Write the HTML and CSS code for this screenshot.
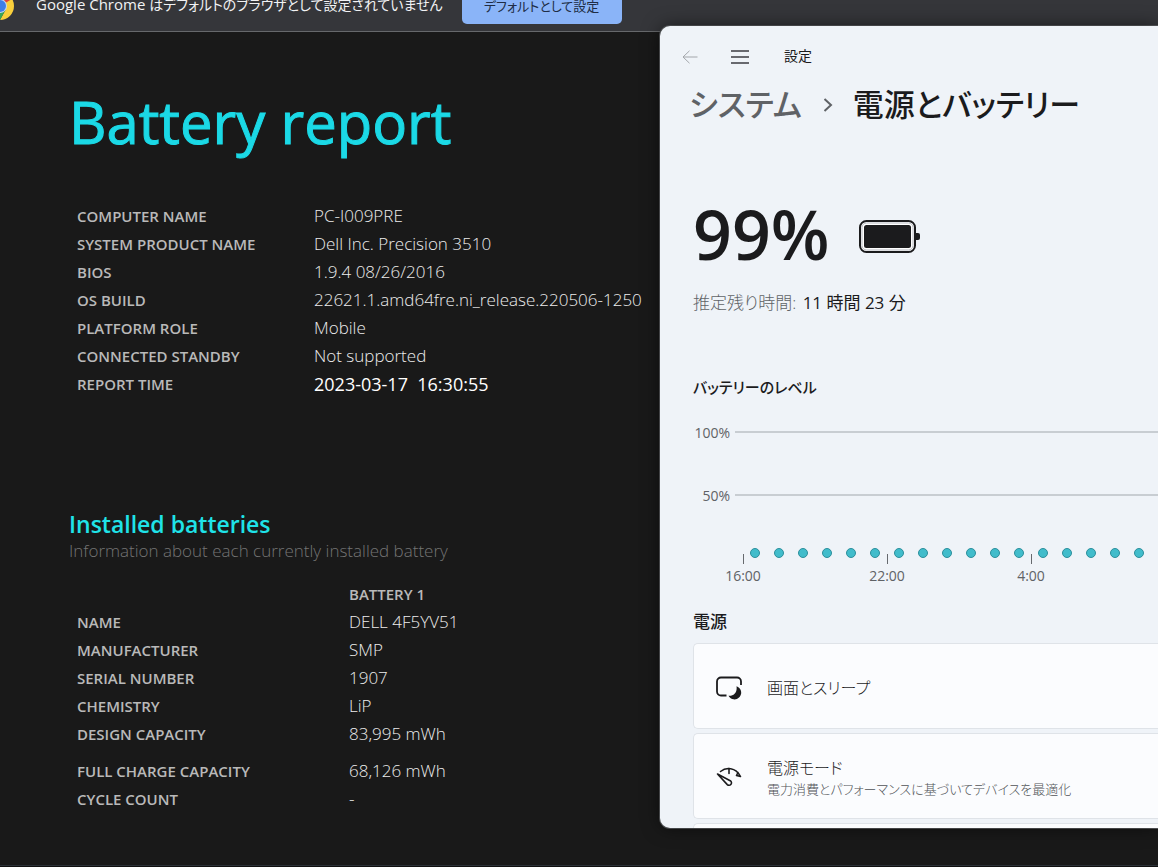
FILE: index.html
```html
<!DOCTYPE html>
<html lang="ja">
<head>
<meta charset="utf-8">
<title>Battery report</title>
<link rel="stylesheet" href="styles.css">
</head>
<body>
<div class="browser">
  <div class="infobar">
    <svg class="chrome-logo" viewBox="0 0 28 28" aria-hidden="true">
      <path d="M14 14V0A14 14 0 0 1 14 28L20 17Z" fill="#f9cf3c"/>
      <path d="M14 14 1.9 7A14 14 0 0 0 14 28L20 17Z" fill="#3ba757"/>
      <path d="M14 14 1.9 7A14 14 0 0 1 26.1 7Z" fill="#e24335"/>
      <circle cx="14" cy="14" r="7" fill="#c3d6f5"/>
      <circle cx="14" cy="14" r="6" fill="#3f7ee8"/>
    </svg>
    <span class="infobar-text">Google Chrome <span class="infobar-ja">はデフォルトのブラウザとして設定されていません</span></span>
    <button class="infobar-button" type="button">デフォルトとして設定</button>
  </div>
  <main class="report">
    <h1 class="report-title">Battery report</h1>
    <table class="facts">
      <tr><th scope="row">COMPUTER NAME</th><td>PC-I009PRE</td></tr>
      <tr><th scope="row">SYSTEM PRODUCT NAME</th><td>Dell Inc. Precision 3510</td></tr>
      <tr><th scope="row">BIOS</th><td>1.9.4 08/26/2016</td></tr>
      <tr><th scope="row">OS BUILD</th><td>22621.1.amd64fre.ni_release.220506-1250</td></tr>
      <tr><th scope="row">PLATFORM ROLE</th><td>Mobile</td></tr>
      <tr><th scope="row">CONNECTED STANDBY</th><td>Not supported</td></tr>
      <tr><th scope="row">REPORT TIME</th><td class="strong">2023-03-17&nbsp; 16:30:55</td></tr>
    </table>
    <h2 class="section-title">Installed batteries</h2>
    <p class="section-note">Information about each currently installed battery</p>
    <table class="facts batteries">
      <tr><td></td><th scope="col">BATTERY 1</th></tr>
      <tr><th scope="row">NAME</th><td>DELL 4F5YV51</td></tr>
      <tr><th scope="row">MANUFACTURER</th><td>SMP</td></tr>
      <tr><th scope="row">SERIAL NUMBER</th><td>1907</td></tr>
      <tr><th scope="row">CHEMISTRY</th><td>LiP</td></tr>
      <tr><th scope="row">DESIGN CAPACITY</th><td>83,995 mWh</td></tr>
      <tr class="spaced"><th scope="row">FULL CHARGE CAPACITY</th><td>68,126 mWh</td></tr>
      <tr><th scope="row">CYCLE COUNT</th><td>-</td></tr>
    </table>
  </main>
  <div class="taskbar"></div>
</div>

<section class="settings" aria-label="設定">
  <header class="titlebar">
    <button class="icon-button back" type="button" aria-label="戻る">
      <svg width="16" height="14" viewBox="0 0 16 14"><path d="M7.5.8 1 7l6.500 6.200M1 7h14.500"/></svg>
    </button>
    <button class="icon-button menu" type="button" aria-label="メニュー">
      <svg width="20" height="14" viewBox="0 0 20 14"><path d="M1 1h18M1 7h18M1 13h18"/></svg>
    </button>
    <span class="app-name">設定</span>
  </header>
  <nav class="crumbs">
    <a class="crumb" href="#">システム</a>
    <svg class="chevron" width="10" height="14" viewBox="0 0 10 14" aria-hidden="true"><path d="m1.500 1 6.500 6-6.500 6"/></svg>
    <h2 class="crumb current">電源とバッテリー</h2>
  </nav>
  <div class="charge">
    <span class="percent">99%</span>
    <svg class="battery" width="62" height="34" viewBox="0 0 62 34" aria-hidden="true">
      <rect x="1" y="1" width="55" height="31" rx="6.500" fill="#fff" stroke="#1b1b1d" stroke-width="2"/>
      <rect x="3" y="3" width="51" height="27" rx="4.500" fill="none" stroke="#b9bbc2" stroke-width="1"/>
      <rect x="5" y="5" width="47" height="23" rx="2.500" fill="#1b1b1d"/>
      <path d="M57 13h2q2 0 2 2v3q0 2-2 2h-2z" fill="#1b1b1d"/>
    </svg>
  </div>
  <p class="remaining"><span class="muted">推定残り時間:</span> <span class="duration">11 時間 23 分</span></p>
  <h3 class="group-title level-title">バッテリーのレベル</h3>
  <div class="chart">
    <div class="level"><span class="level-label">100%</span><span class="level-line"></span></div>
    <div class="level"><span class="level-label">50%</span><span class="level-line"></span></div>
    <div class="axis">
      <div class="period"><div class="dots"><i></i><i></i><i></i><i></i><i></i><i></i></div><span class="time">16:00</span></div>
      <div class="period"><div class="dots"><i></i><i></i><i></i><i></i><i></i><i></i></div><span class="time">22:00</span></div>
      <div class="period"><div class="dots"><i></i><i></i><i></i><i></i><i></i><i></i></div><span class="time">4:00</span></div>
    </div>
  </div>
  <h3 class="group-title power-title">電源</h3>
  <div class="cards">
    <button class="card" type="button">
      <svg class="card-icon" width="28" height="26" viewBox="0 0 28 26" aria-hidden="true">
        <path d="M11.500 20.500H6a4 4 0 0 1-4-4V6.500a4 4 0 0 1 4-4h16a4 4 0 0 1 4 4V10" fill="none" stroke="#1b1b1d" stroke-width="1.800"/>
        <path d="M21.500 11.300a6.700 6.700 0 1 1-8 9.400c5 .6 9-3.200 8-9.400Z" fill="#1b1b1d"/>
      </svg>
      <span class="card-text"><span class="card-name">画面とスリープ</span></span>
    </button>
    <button class="card" type="button">
      <svg class="card-icon" width="28" height="26" viewBox="0 0 28 26" aria-hidden="true" fill="none" stroke="#1b1b1d" stroke-width="1.600" stroke-linecap="round" stroke-linejoin="round">
        <path d="M5.500 6.500C11 2 20.500 2 25.500 11.500l-4-1M14 3.500v5M21.500 10.500l1.500-3"/>
        <path d="M2.500 9 15.700 16a2.400 2.400 0 1 1-3.400 3.600Z"/>
      </svg>
      <span class="card-text"><span class="card-name">電源モード</span><span class="card-note">電力消費とパフォーマンスに基づいてデバイスを最適化</span></span>
    </button>
    <button class="card" type="button" aria-label="その他"></button>
  </div>
</section>
</body>
</html>
```
FILE: styles.css
```css
* { box-sizing: border-box; }

body {
  margin: 0;
  position: relative;
  height: 100vh;
  overflow: hidden;
  background: #191919;
  color: #ececec;
  font-family: "Open Sans", "Noto Sans CJK JP", sans-serif;
}

h1, h2, h3, p { margin: 0; }

button {
  border: 0;
  padding: 0;
  font: inherit;
  color: inherit;
  background: none;
}

/* Browser */
.browser {
  display: flex;
  flex-direction: column;
  height: 100%;
}

.infobar {
  display: flex;
  align-items: flex-end;
  flex: none;
  height: 32px;
  padding-bottom: 7px;
  background: #35363a;
  border-bottom: 1px solid #66686b;
  overflow: hidden;
  font-size: 15px;
  font-feature-settings: "palt";
  white-space: nowrap;
}

.chrome-logo {
  flex: none;
  width: 28px;
  height: 28px;
  margin: 0 22px 4px -14px;
}

.infobar-text {
  color: #f1f2f4;
  line-height: 38px;
}

.infobar-ja { font-size: 14px; }

.infobar-button {
  width: 160px;
  height: 38px;
  margin-left: 19px;
  border-radius: 5px;
  background: #8ab4f8;
  color: #202d45;
  font-size: 13px;
}

.report {
  flex: 1;
  min-height: 0;
  padding: 48px 0 0 69px;
}

.report-title {
  color: #1bd9e6;
  font-size: 58px;
  font-weight: 400;
  line-height: 84px;
  -webkit-text-stroke: 1px #1bd9e6;
}

.facts {
  margin: 38px 0 0 8px;
  border-collapse: collapse;
}

.facts tr { height: 28px; }

.facts th, .facts td {
  padding: 0;
  text-align: left;
  white-space: nowrap;
  line-height: 28px;
}

.facts th {
  min-width: 237px;
  color: #b9b9b9;
  font-size: 15px;
  font-weight: 600;
}

.facts td {
  font-size: 17px;
  font-weight: 300;
}

.facts .strong {
  color: #fff;
  font-size: 18px;
  font-weight: 400;
}

.section-title {
  margin-top: 110px;
  color: #1fe3e8;
  font-size: 23px;
  font-weight: 600;
  line-height: 32px;
}

.section-note {
  color: #747474;
  font-size: 17px;
  font-weight: 300;
  line-height: 22px;
}

.batteries { margin-top: 18px; }
.batteries th { min-width: 272px; }
.batteries .spaced th, .batteries .spaced td { padding-top: 9px; }

.taskbar {
  flex: none;
  height: 2px;
  background: #101010;
  border-top: 1px solid #2b3036;
}

/* Settings window, floating over the browser */
.settings {
  position: absolute;
  left: 660px;
  top: 26px;
  right: 0;
  bottom: 39px;
  padding: 15px 0 0 33px;
  overflow: hidden;
  border-radius: 10px 0 0 10px;
  background: #eff3f8;
  color: #1b1b1d;
  box-shadow: 0 0 18px #0008, 0 0 0 1px #5a5c5f;
  font-feature-settings: "palt";
  white-space: nowrap;
}

.titlebar {
  display: flex;
  align-items: center;
  height: 32px;
  margin-left: -19px;
}

.icon-button {
  display: grid;
  place-items: center;
  width: 32px;
  height: 32px;
}

.icon-button svg, .chevron {
  fill: none;
  stroke: currentColor;
}

.back { color: #a3a6ab; }
.menu { margin-left: 18px; color: #3c3c42; }
.menu svg { stroke-width: 1.5; }

.app-name {
  margin-left: 28px;
  font-size: 14px;
  line-height: 20px;
  padding-bottom: 2px;
}

.crumbs {
  display: flex;
  align-items: center;
  height: 48px;
  margin: 7px 0 1px -4px;
}

.crumb {
  color: #5f6266;
  font-size: 31px;
  font-weight: 500;
  line-height: 48px;
  text-decoration: none;
}

.crumb.current { color: #1b1b1d; }

.chevron {
  margin: 2px 20px 0 21px;
  color: #5f6266;
  stroke-width: 2;
}

.charge {
  display: flex;
  align-items: center;
  height: 84px;
  margin-top: 64px;
}

.percent {
  font-size: 68px;
  font-weight: 600;
  line-height: 84px;
}

.battery { margin: 6px 0 0 29px; }

.remaining {
  margin-top: 13px;
  font-size: 17px;
  line-height: 28px;
}

.muted {
  color: #606367;
  font-weight: 300;
}

.duration { margin-left: 2px; }

.group-title {
  font-size: 17px;
  font-weight: 500;
  line-height: 28px;
}

.level-title {
  margin-top: 56px;
  font-size: 15px;
}

.chart {
  margin-top: 21px;
  color: #5f6266;
  font-size: 14px;
}

.level {
  display: flex;
  align-items: center;
  height: 20px;
  margin-bottom: 43px;
}

.level-label {
  width: 37px;
  text-align: right;
}

.level-line {
  flex: 1;
  height: 2px;
  margin-left: 5px;
  background: #c8cdd2;
}

.axis {
  display: flex;
  margin-left: 50px;
}

.period {
  flex: none;
  width: 144px;
}

.dots {
  display: flex;
  height: 16px;
  background: linear-gradient(#66696e, #66696e) 0 100% / 1px 10px no-repeat;
}

.dots i {
  width: 10px;
  height: 10px;
  margin: 0 7px;
  border: 1px solid #2c8f9c;
  border-radius: 50%;
  background: #41bccb;
}

.time {
  display: block;
  width: 60px;
  margin-left: -30px;
  text-align: center;
  line-height: 24px;
}

.power-title { margin-top: 20px; }

.cards {
  display: grid;
  gap: 4px;
  margin-top: 7px;
}

.card {
  display: flex;
  align-items: center;
  min-height: 86px;
  padding: 4px 0 0 21px;
  border: 1px solid #dfe3e8;
  border-right: 0;
  border-radius: 5px 0 0 5px;
  background: #fbfcfe;
  text-align: left;
}

.card-icon { flex: none; }

.card-text {
  display: flex;
  flex-direction: column;
  margin-left: 24px;
}

.card-name {
  font-size: 16px;
  font-weight: 300;
  line-height: 22px;
}

.card-note {
  color: #505357;
  font-size: 13px;
  font-weight: 300;
  line-height: 20px;
}
```
